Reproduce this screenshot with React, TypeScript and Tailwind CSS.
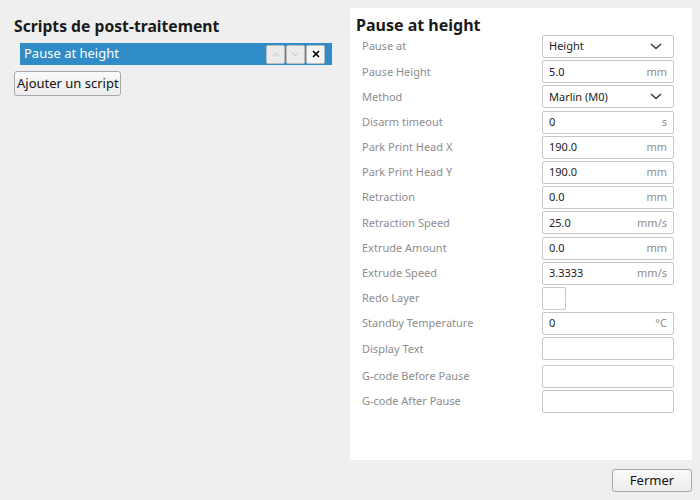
import { ChevronDown, ChevronUp, X } from 'lucide-react';

type Row = {
  label: string;
  kind: 'select' | 'text' | 'check';
  value?: string;
  unit?: string;
  gapTop?: boolean;
};

const rows: Row[] = [
  { label: 'Pause at', kind: 'select', value: 'Height' },
  { label: 'Pause Height', kind: 'text', value: '5.0', unit: 'mm' },
  { label: 'Method', kind: 'select', value: 'Marlin (M0)' },
  { label: 'Disarm timeout', kind: 'text', value: '0', unit: 's' },
  { label: 'Park Print Head X', kind: 'text', value: '190.0', unit: 'mm' },
  { label: 'Park Print Head Y', kind: 'text', value: '190.0', unit: 'mm' },
  { label: 'Retraction', kind: 'text', value: '0.0', unit: 'mm' },
  { label: 'Retraction Speed', kind: 'text', value: '25.0', unit: 'mm/s' },
  { label: 'Extrude Amount', kind: 'text', value: '0.0', unit: 'mm' },
  { label: 'Extrude Speed', kind: 'text', value: '3.3333', unit: 'mm/s' },
  { label: 'Redo Layer', kind: 'check' },
  { label: 'Standby Temperature', kind: 'text', value: '0', unit: '°C' },
  { label: 'Display Text', kind: 'text', value: '' },
  { label: 'G-code Before Pause', kind: 'text', value: '', gapTop: true },
  { label: 'G-code After Pause', kind: 'text', value: '' },
];

function SelectChevron() {
  return (
    <svg width="12" height="7" viewBox="0 0 12 7" className="mr-[5px]">
      <path d="M1 1 L6 5.5 L11 1" fill="none" stroke="#3a3a3a" strokeWidth="1.5" />
    </svg>
  );
}

function SettingRow({ row }: { row: Row }) {
  return (
    <div className={`flex items-center h-[25.2px] ${row.gapTop ? 'mt-[2px]' : ''}`}>
      <div className="w-[192px] pl-[12px] text-[11px] text-[#8d8d8d]">{row.label}</div>
      {row.kind === 'check' ? (
        <div className="w-[24px] h-[23px] bg-white border border-[#c8c8c8] rounded-[2px]" />
      ) : (
        <div className="w-[132px] h-[23px] bg-white border border-[#c8c8c8] rounded-[2px] flex items-center pl-[6px] pr-[6px] text-[11px]">
          <span className="flex-1 text-[#1c1c1c]">{row.value}</span>
          {row.kind === 'select' && <SelectChevron />}
          {row.unit && <span className="text-[#8d8d8d]">{row.unit}</span>}
        </div>
      )}
    </div>
  );
}

export default function App() {
  return (
    <div className="w-[700px] h-[500px] bg-[#efefef] relative overflow-hidden" style={{ fontFamily: '"Noto Sans", sans-serif' }}>
      <div className="flex h-[460px]">
        {/* Left: script list */}
        <div className="w-[350px] pl-[14px] pt-[15px]">
          <h2 className="text-[15.7px] leading-[22px] font-bold text-[#1a1a1a]">Scripts de post-traitement</h2>
          <div className="ml-[6px] mt-[6px] w-[312px] h-[22px] bg-[#308cc6] flex items-center pl-[4px] pr-[7px]">
            <span className="flex-1 text-[13px] text-white">Pause at height</span>
            <div className="flex gap-[1px]">
              <button className="w-[19px] h-[19px] bg-[#ebebeb] border border-[#bdbdbd] rounded-[2px] flex items-center justify-center">
                <ChevronUp className="w-[11px] h-[11px] text-[#b8b8b8]" strokeWidth={2} />
              </button>
              <button className="w-[19px] h-[19px] bg-[#ebebeb] border border-[#bdbdbd] rounded-[2px] flex items-center justify-center">
                <ChevronDown className="w-[11px] h-[11px] text-[#b8b8b8]" strokeWidth={2} />
              </button>
              <button className="w-[19px] h-[19px] bg-[#f4f4f4] border border-[#bdbdbd] rounded-[2px] flex items-center justify-center">
                <X className="w-[10px] h-[10px] text-black" strokeWidth={4} />
              </button>
            </div>
          </div>
          <button className="mt-[6px] w-[107px] h-[25px] px-[2px] whitespace-nowrap border border-[#a9a9a9] rounded-[3px] bg-gradient-to-b from-[#fafafa] to-[#ececec] text-[13px] text-[#111]">
            Ajouter un script
          </button>
        </div>

        {/* Right: settings panel */}
        <div className="mt-[8px] w-[342px] h-[452px] bg-white pt-[7px]">
          <h2 className="pl-[6px] text-[16px] leading-[20px] font-bold text-[#1a1a1a]">Pause at height</h2>
          <div className="flex flex-col mt-[-1px]">
            {rows.map((r) => (
              <SettingRow key={r.label} row={r} />
            ))}
          </div>
        </div>
      </div>

      <div className="flex justify-end pr-[8px] pt-[9px]">
        <button className="w-[80px] h-[23px] border border-[#a9a9a9] rounded-[3px] bg-gradient-to-b from-[#fafafa] to-[#ececec] text-[13px] text-[#111]">
          Fermer
        </button>
      </div>
    </div>
  );
}
